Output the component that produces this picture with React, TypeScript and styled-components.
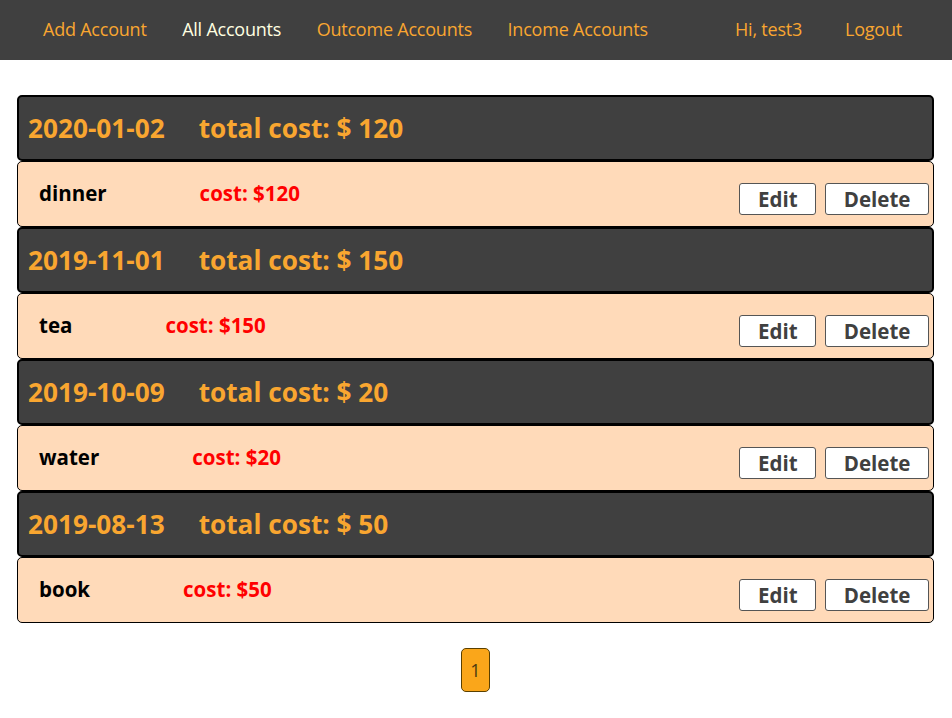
import React from "react";
import styled, { createGlobalStyle } from "styled-components";

const Global = createGlobalStyle`
  html, body { margin: 0; padding: 0; background: #fff; }
  body { font-family: "Open Sans", "DejaVu Sans", sans-serif; }
  * { box-sizing: border-box; }
`;

const Nav = styled.nav`
  height: 60px;
  background: #404040;
  display: flex;
  align-items: center;
  padding: 0 50px 2px 43px;
`;

const NavGroup = styled.div<{ $gap: number }>`
  display: flex;
  align-items: center;
  gap: ${(p) => p.$gap}px;
`;

const NavLink = styled.a<{ $active?: boolean }>`
  font-size: 18px;
  color: ${(p) => (p.$active ? "#ffffe0" : "#f9a630")};
  text-decoration: none;
  letter-spacing: -0.22px;
  cursor: pointer;
`;

const Spacer = styled.div`
  flex: 1;
`;

const Main = styled.main`
  padding: 35px 18px 0 17px;
`;

const Header = styled.div`
  height: 66px;
  background: #404040;
  border: 2px solid #000;
  border-radius: 5px;
  display: flex;
  align-items: center;
  padding: 0 9px;
  gap: 34px;
`;

const HeaderText = styled.span`
  font-size: 26.2px;
  font-weight: 700;
  color: #f9a630;
`;

const Row = styled.div`
  height: 66px;
  background: #ffdab9;
  border: 1px solid #000;
  border-radius: 5px;
  display: flex;
  align-items: flex-start;
  padding: 18px 4px 0 21px;
`;

const Name = styled.span`
  font-size: 20.5px;
  font-weight: 700;
  color: #000;
  line-height: 27px;
  margin-right: 93px;
`;

const Cost = styled.span`
  font-size: 20.5px;
  font-weight: 700;
  color: #ff0000;
  line-height: 27px;
`;

const Buttons = styled.div`
  margin-left: auto;
  margin-top: 3px;
  display: flex;
  gap: 9px;
`;

const Button = styled.button`
  height: 32px;
  padding: 0 17.6px;
  background: #fff;
  border: 1px solid #555;
  border-radius: 3px;
  font-family: "Open Sans", "DejaVu Sans", sans-serif;
  font-size: 20.5px;
  font-weight: 700;
  color: #404040;
  line-height: 30px;
  cursor: pointer;
`;

const Pager = styled.div`
  display: flex;
  justify-content: center;
  padding-top: 25px;
`;

const PageButton = styled.button`
  width: 29px;
  height: 44px;
  background: #faa61a;
  border: 1px solid #5a4000;
  border-radius: 5px;
  font-family: "Open Sans", "DejaVu Sans", sans-serif;
  font-size: 18px;
  color: #4a3a10;
  padding: 0;
`;

const data = [
  { date: "2020-01-02", total: 120, name: "dinner", cost: 120 },
  { date: "2019-11-01", total: 150, name: "tea", cost: 150 },
  { date: "2019-10-09", total: 20, name: "water", cost: 20 },
  { date: "2019-08-13", total: 50, name: "book", cost: 50 },
];

export default function App() {
  return (
    <>
      <Global />
      <Nav>
        <NavGroup $gap={35.5}>
          <NavLink>Add Account</NavLink>
          <NavLink $active>All Accounts</NavLink>
          <NavLink>Outcome Accounts</NavLink>
          <NavLink>Income Accounts</NavLink>
        </NavGroup>
        <Spacer />
        <NavGroup $gap={43}>
          <NavLink>Hi, test3</NavLink>
          <NavLink>Logout</NavLink>
        </NavGroup>
      </Nav>
      <Main>
        {data.map((d) => (
          <div key={d.date}>
            <Header>
              <HeaderText>{d.date}</HeaderText>
              <HeaderText>total cost: $ {d.total}</HeaderText>
            </Header>
            <Row>
              <Name>{d.name}</Name>
              <Cost>cost: ${d.cost}</Cost>
              <Buttons>
                <Button>Edit</Button>
                <Button>Delete</Button>
              </Buttons>
            </Row>
          </div>
        ))}
        <Pager>
          <PageButton>1</PageButton>
        </Pager>
      </Main>
    </>
  );
}
